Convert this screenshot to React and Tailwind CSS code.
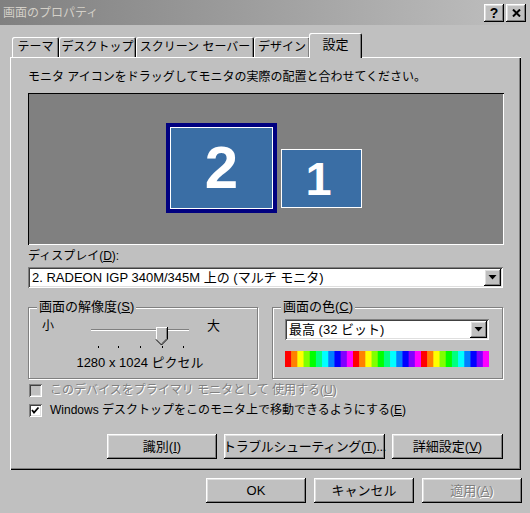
import React from 'react';

const FONT = "font-['Liberation_Sans','Noto_Sans_CJK_JP',sans-serif]";
const RAISED =
  'shadow-[inset_-1px_-1px_0_#000,inset_1px_1px_0_#fff,inset_-2px_-2px_0_#808080,inset_2px_2px_0_#dfdfdf]';
const SUNKEN =
  'shadow-[inset_1px_1px_0_#808080,inset_-1px_-1px_0_#fff,inset_2px_2px_0_#404040,inset_-2px_-2px_0_#dfdfdf]';
const ETCHED = 'border border-[#808080] shadow-[inset_1px_1px_0_#fff,1px_1px_0_#fff]';
const DISABLED = 'text-[#808080] [text-shadow:1px_1px_0_#fff]';

const TABS = [
  { label: 'テーマ', w: 'w-[47px]' },
  { label: 'デスクトップ', w: 'w-[77px]' },
  { label: 'スクリーン セーバー', w: 'w-[118px]' },
  { label: 'デザイン', w: 'w-[56px]' },
];

function U({ children }) {
  return <span className="underline underline-offset-[1px]">{children}</span>;
}

function DropArrow() {
  return (
    <div className={`flex h-[17px] w-[17px] shrink-0 items-center justify-center bg-[#c0c0c0] ${RAISED}`}>
      <svg width="9" height="5" viewBox="0 0 9 5">
        <polygon points="0.5,0 8.5,0 4.5,4.5" fill="#000" />
      </svg>
    </div>
  );
}

function Select({ children, className = '' }) {
  return (
    <div className={`flex h-[21px] items-center bg-white pl-[4px] pr-[2px] ${SUNKEN} ${className}`}>
      <span className="flex-1 truncate text-[13px] leading-[16px] text-black">{children}</span>
      <DropArrow />
    </div>
  );
}

function Checkbox({ checked, disabled }) {
  return (
    <div className={`h-[13px] w-[13px] shrink-0 ${disabled ? 'bg-[#c0c0c0]' : 'bg-white'} ${SUNKEN}`}>
      {checked && (
        <svg width="13" height="13" viewBox="0 0 13 13">
          <polyline points="3,6 5,8.5 9.5,3.5" fill="none" stroke="#000" strokeWidth="1.8" />
        </svg>
      )}
    </div>
  );
}

function Button({ children, className = '', disabled }) {
  return (
    <div
      className={`flex h-[25px] items-center justify-center whitespace-nowrap bg-[#c0c0c0] text-[13px] ${
        disabled ? DISABLED : 'text-black'
      } ${RAISED} ${className}`}
    >
      {children}
    </div>
  );
}

function Slider() {
  const ticks = [10, 30, 52, 74, 95];
  return (
    <svg width="106" height="32" viewBox="0 0 106 32" shapeRendering="crispEdges">
      <rect x="3" y="11" width="98" height="1" fill="#808080" />
      <rect x="3" y="12" width="98" height="1" fill="#fff" />
      {ticks.map((x) => (
        <rect key={x} x={x} y="28" width="1" height="2" fill="#000" />
      ))}
      <polygon points="68,9 79,9 79,21 73.5,26.5 68,21" fill="#c0c0c0" shapeRendering="auto" />
      <polyline points="68.5,21 68.5,9.5 78.5,9.5" fill="none" stroke="#fff" />
      <polyline points="79.5,9 79.5,21 73.5,27 68,21.5" fill="none" stroke="#000" shapeRendering="auto" />
      <polyline points="78.5,10 78.5,20.5 73.5,25.5" fill="none" stroke="#808080" shapeRendering="auto" />
    </svg>
  );
}

function ColorBar() {
  const bands = [];
  const per = 11;
  const total = 3 * per;
  const w = 204 / total;
  for (let i = 0; i < total; i++) {
    const hue = ((i % per) * 300) / (per - 1);
    bands.push(<rect key={i} x={i * w} y="0" width={w + 0.5} height="16" fill={`hsl(${hue},100%,50%)`} />);
  }
  return (
    <svg width="204" height="16" viewBox="0 0 204 16" className="block">
      {bands}
    </svg>
  );
}

export default function App() {
  return (
    <div className={`flex h-[513px] w-[530px] flex-col overflow-hidden bg-[#c0c0c0] text-[12px] ${FONT}`}>
      {/* Title bar */}
      <div className="flex h-[25px] shrink-0 items-center bg-gradient-to-r from-[#808080] to-[#c0c0c0] pl-[3px] pr-[4px]">
        <span className="flex-1 text-[12px] leading-[16px] text-[#d4d0c8]">画面のプロパティ</span>
        <div className="flex gap-[2px]">
          <div className={`flex h-[18px] w-[20px] items-center justify-center bg-[#c0c0c0] ${RAISED}`}>
            <span className="text-[14px] font-bold leading-none text-black">?</span>
          </div>
          <div className={`flex h-[18px] w-[20px] items-center justify-center bg-[#c0c0c0] ${RAISED}`}>
            <svg width="9" height="8" viewBox="0 0 9 8">
              <path d="M1 0.5 L8 7.5 M8 0.5 L1 7.5" stroke="#000" strokeWidth="2" />
            </svg>
          </div>
        </div>
      </div>

      {/* Tabs */}
      <div className="mt-[8px] flex h-[24px] shrink-0 items-end pl-[12px]">
        {TABS.map((t) => (
          <div
            key={t.label}
            className={`flex h-[20px] ${t.w} items-center justify-center rounded-t-[2px] text-black shadow-[inset_1px_1px_0_#fff,inset_-1px_0_0_#000,inset_-2px_0_0_#808080]`}
          >
            <span className="whitespace-nowrap leading-[14px]">{t.label}</span>
          </div>
        ))}
        <div className="relative z-10 -mb-px -ml-px flex h-[25px] w-[53px] items-center justify-center rounded-t-[2px] bg-[#c0c0c0] pb-[2px] text-black shadow-[inset_1px_1px_0_#fff,inset_-1px_0_0_#000,inset_-2px_0_0_#808080]">
          <span className="text-[13px] leading-[14px]">設定</span>
        </div>
      </div>

      {/* Panel */}
      <div className="ml-[10px] mr-[9px] flex h-[413px] shrink-0 flex-col pl-[18px] pr-[18px] pt-[13px] shadow-[inset_1px_1px_0_#fff,inset_-1px_-1px_0_#000,inset_-2px_-2px_0_#808080]">
        <p className="h-[14px] leading-[14px] text-black">
          モニタ アイコンをドラッグしてモニタの実際の配置と合わせてください。
        </p>

        {/* Monitor arrangement */}
        <div className="relative mt-[9px] h-[152px] w-[476px] bg-[#808080] shadow-[inset_1px_1px_0_#000,inset_-1px_-1px_0_#fff]">
          <div className="absolute left-[138px] top-[30px] h-[90px] w-[111px] border-[4px] border-[#000080] bg-[#3a6ea5]">
            <div className="flex h-full w-full items-center justify-center border border-white">
              <span className="font-['Liberation_Sans',sans-serif] text-[60px] font-bold leading-none text-white">2</span>
            </div>
          </div>
          <div className="absolute left-[253px] top-[56px] flex h-[59px] w-[81px] items-center justify-center border border-white bg-[#3a6ea5]">
            <span className="-ml-[6px] font-['Liberation_Sans',sans-serif] text-[47px] font-bold leading-none text-white">1</span>
          </div>
        </div>

        <p className="mt-[4px] h-[14px] leading-[14px] text-black">
          ディスプレイ(<U>D</U>):
        </p>
        <Select className="mt-[4px] w-[475px]">2. RADEON IGP 340M/345M 上の (マルチ モニタ)</Select>

        {/* Group boxes */}
        <div className="mt-[19px] flex h-[72px] gap-[14px]">
          <div className={`flex w-[230px] flex-col ${ETCHED}`}>
            <span className="-mt-[8px] ml-[8px] w-fit bg-[#c0c0c0] px-[2px] text-[13px] leading-[14px] text-black">
              画面の解像度(<U>S</U>)
            </span>
            <div className="mt-[4px] flex h-[32px]">
              <span className="ml-[13px] mt-[1px] leading-[14px] text-black">小</span>
              <div className="ml-[34px]">
                <Slider />
              </div>
              <span className="ml-[13px] mt-[1px] text-[13px] leading-[14px] text-black">大</span>
            </div>
            <p className="mt-[6px] pr-[6px] text-center text-[13px] leading-[14px] text-black">
              1280 x 1024 ピクセル
            </p>
          </div>

          <div className={`flex w-[231px] flex-col ${ETCHED}`}>
            <span className="-mt-[8px] ml-[8px] w-fit bg-[#c0c0c0] px-[2px] text-[13px] leading-[14px] text-black">
              画面の色(<U>C</U>)
            </span>
            <Select className="ml-[12px] mt-[5px] w-[204px]">最高 (32 ビット)</Select>
            <div className="ml-[12px] mt-[11px]">
              <ColorBar />
            </div>
          </div>
        </div>

        {/* Checkboxes */}
        <div className="ml-[1px] mt-[4px] flex h-[14px] items-center gap-[8px]">
          <Checkbox disabled />
          <span className={`leading-[14px] ${DISABLED}`}>
            このデバイスをプライマリ モニタとして 使用する(<U>U</U>)
          </span>
        </div>
        <div className="ml-[1px] mt-[6px] flex h-[14px] items-center gap-[8px]">
          <Checkbox checked />
          <span className="leading-[14px] text-black">
            Windows デスクトップをこのモニタ上で移動できるようにする(<U>E</U>)
          </span>
        </div>

        {/* Action buttons */}
        <div className="mt-[17px] flex justify-end gap-[7px]">
          <Button className="w-[110px]">
            識別(<U>I</U>)
          </Button>
          <Button className="w-[161px] text-[12px] tracking-[-0.4px]">
            トラブルシューティング(<U>T</U>)...
          </Button>
          <Button className="w-[111px]">
            詳細設定(<U>V</U>)
          </Button>
        </div>
      </div>

      {/* Dialog buttons */}
      <div className="mr-[8px] mt-[8px] flex justify-end gap-[8px]">
        <Button className="w-[100px]">OK</Button>
        <Button className="w-[100px]">キャンセル</Button>
        <Button className="w-[100px]" disabled>
          適用(<U>A</U>)
        </Button>
      </div>
    </div>
  );
}
